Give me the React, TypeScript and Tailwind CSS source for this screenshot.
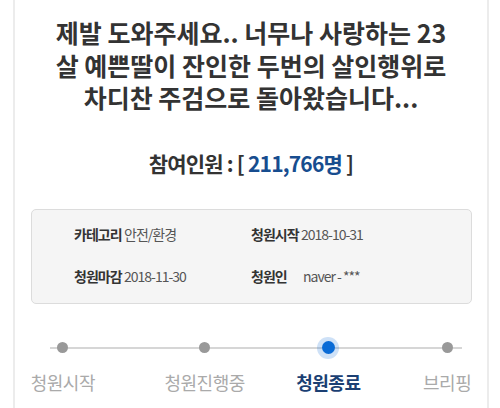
import React from 'react';

const steps = [
  { label: '청원시작', width: 'w-[80px]', ml: 'ml-[8px]', active: false },
  { label: '청원진행중', width: 'w-[84px]', ml: 'ml-[60px]', active: false },
  { label: '청원종료', width: 'w-[84px]', ml: 'ml-[40px]', active: true },
  { label: '브리핑', width: 'w-[80px]', ml: 'ml-[37px]', active: false },
];

const App: React.FC = () => {
  return (
    <div className="w-[500px] h-[408px] bg-white overflow-hidden font-['Noto_Sans_CJK_KR','Noto_Sans',sans-serif]">
      <div className="ml-[13px] w-[476px] h-full border-x-2 border-[#ececec] flex flex-col">
        {/* Title */}
        <h1 className="pt-[16px] text-center text-[25px] font-bold leading-[32.5px] tracking-[0px] text-[#333] whitespace-nowrap">
          제발 도와주세요.. 너무나 사랑하는 23
          <br />
          살 예쁜딸이 잔인한 두번의 살인행위로
          <br />
          차디찬 주검으로 돌아왔습니다...
        </h1>

        {/* Participants */}
        <p className="mt-[35px] text-center text-[21px] font-bold leading-[28px] tracking-[-0.8px] text-[#333]">
          참여인원 : [ <span className="text-[#174d8f]">211,766명</span> ]
        </p>

        {/* Info box */}
        <div className="mt-[32px] ml-[16px] mr-[15px] h-[95px] rounded-[5px] border border-[#dcdcdc] bg-[#f5f5f5] grid grid-cols-[177px_1fr] content-center gap-y-[22px] pl-[42px] pb-[2px] text-[14px] leading-[20px] tracking-[-1px]">
          <div className="flex">
            <span className="min-w-[50px] font-bold text-[#333]">카테고리</span>
            <span className="text-[#555]">안전/환경</span>
          </div>
          <div className="flex">
            <span className="min-w-[50px] font-bold text-[#333]">청원시작</span>
            <span className="text-[#555]">2018-10-31</span>
          </div>
          <div className="flex">
            <span className="min-w-[50px] font-bold text-[#333]">청원마감</span>
            <span className="text-[#555]">2018-11-30</span>
          </div>
          <div className="flex">
            <span className="min-w-[52px] font-bold text-[#333]">청원인</span>
            <span className="text-[#555]">naver - ***</span>
          </div>
        </div>

        {/* Progress steps */}
        <div className="relative mt-[33px] flex">
          <div className="absolute left-[35px] w-[412px] top-[10px] h-[2px] bg-[#d6d6d6]" />
          {steps.map((s, i) => (
            <div key={i} className={`${s.width} ${s.ml} relative flex flex-col items-center`}>
              <div className="h-[22px] flex items-center justify-center">
                {s.active ? (
                  <div className="w-[22px] h-[22px] rounded-full bg-[#0a6bd6]/20 flex items-center justify-center">
                    <div className="w-[13px] h-[13px] rounded-full bg-[#0a6bd6]" />
                  </div>
                ) : (
                  <div className="w-[11px] h-[11px] rounded-full bg-[#999]" />
                )}
              </div>
              <span
                className={`mt-[11px] text-[18px] leading-[24px] tracking-[-0.5px] whitespace-nowrap ${
                  s.active ? 'font-bold text-[#1b3f73]' : 'text-[#aaa]'
                }`}
              >
                {s.label}
              </span>
            </div>
          ))}
        </div>
      </div>
    </div>
  );
};

export default App;
